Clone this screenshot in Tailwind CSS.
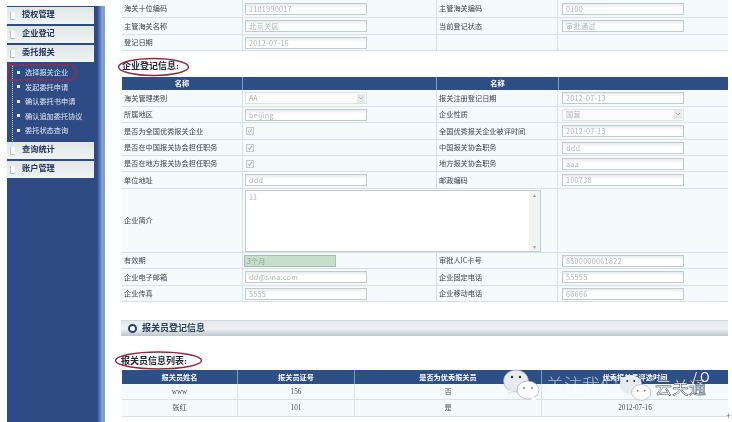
<!DOCTYPE html>
<html lang="zh">
<head>
    <meta charset="UTF-8">
    <title>企业登记信息</title>
    <script src="https://cdn.jsdelivr.net/npm/@tailwindcss/browser@4"></script>
</head>
<body class="bg-white">
<div class="relative w-[732px] h-[422px] overflow-hidden flex bg-white text-[#3d4246] text-[7.2px] font-['Noto_Sans_CJK_SC','Liberation_Sans',sans-serif] blur-[0.45px]">

    <!-- sidebar -->
    <aside class="relative ml-[7px] mt-[6px] w-[98px] shrink-0 bg-gradient-to-r from-[#2f4b85] from-[92%] to-[#7f9fd8] to-[97%]">
        <div class="w-[87px] pt-[1px] flex flex-col gap-[2px]">
            <div class="h-[17px] flex items-center gap-[7px] pl-[3px] bg-gradient-to-b from-[#dfe6e6] to-[#f0f4f3] text-[8.2px] font-bold text-[#24365a] font-['Liberation_Serif','Noto_Sans_CJK_SC',serif]"><span class="w-[5px] h-[8px] border-l border-b border-[#b8c2c4] bg-white/70"></span>授权管理</div>
            <div class="h-[17px] flex items-center gap-[7px] pl-[3px] bg-gradient-to-b from-[#dfe6e6] to-[#f0f4f3] text-[8.2px] font-bold text-[#24365a] font-['Liberation_Serif','Noto_Sans_CJK_SC',serif]"><span class="w-[5px] h-[8px] border-l border-b border-[#b8c2c4] bg-white/70"></span>企业登记</div>
            <div class="h-[17px] flex items-center gap-[7px] pl-[3px] bg-gradient-to-b from-[#dfe6e6] to-[#f0f4f3] text-[8.2px] font-bold text-[#24365a] font-['Liberation_Serif','Noto_Sans_CJK_SC',serif]"><span class="w-[5px] h-[8px] border-l border-b border-[#b8c2c4] bg-white/70"></span>委托报关</div>
        </div>
        <ul class="relative w-[87px] h-[80px] pt-[3px] pl-[10px] text-[#dfe6f2] text-[7.2px] leading-[14.5px]">
            <li class="flex items-center gap-[5px]"><span class="w-[3px] h-[3px] bg-[#e8efe0]"></span>选择报关企业</li>
            <li class="flex items-center gap-[5px]"><span class="w-[3px] h-[3px] bg-[#e8efe0]"></span>发起委托申请</li>
            <li class="flex items-center gap-[5px]"><span class="w-[3px] h-[3px] bg-[#e8efe0]"></span>确认委托书申请</li>
            <li class="flex items-center gap-[5px]"><span class="w-[3px] h-[3px] bg-[#e8efe0]"></span>确认追加委托协议</li>
            <li class="flex items-center gap-[5px]"><span class="w-[3px] h-[3px] bg-[#e8efe0]"></span>委托状态查询</li>
            <span class="absolute left-[5px] top-[3px] h-[76px] border-l border-dotted border-[#cfd8ea]"></span>
            <span class="absolute left-0 top-[2px] w-[70px] h-[17px] rounded-r-[8px] border-2 border-[#8d2f4e]/80"></span>
        </ul>
        <div class="w-[87px] flex flex-col gap-[2px]">
            <div class="h-[17px] flex items-center gap-[7px] pl-[3px] bg-gradient-to-b from-[#dfe6e6] to-[#f0f4f3] text-[8.2px] font-bold text-[#24365a] font-['Liberation_Serif','Noto_Sans_CJK_SC',serif]"><span class="w-[5px] h-[8px] border-l border-b border-[#b8c2c4] bg-white/70"></span>查询统计</div>
            <div class="h-[17px] flex items-center gap-[7px] pl-[3px] bg-gradient-to-b from-[#dfe6e6] to-[#f0f4f3] text-[8.2px] font-bold text-[#24365a] font-['Liberation_Serif','Noto_Sans_CJK_SC',serif]"><span class="w-[5px] h-[8px] border-l border-b border-[#b8c2c4] bg-white/70"></span>账户管理</div>
        </div>
    </aside>

    <!-- content -->
    <main class="pl-[17px] w-[623px]">
        <div id="top-table" class="grid grid-cols-[121px_194px_121px_170px] w-[606px]"></div>
        <h3 class="h-[26px] leading-[30px] text-[9px] font-bold text-[#1c2430] font-['Liberation_Serif','Noto_Sans_CJK_SC',serif]">企业登记信息:</h3>
        <div class="grid grid-cols-[121px_194px_121px_170px] w-[606px] h-[13px] bg-[#2d4f86] text-white font-bold text-center leading-[13px]">
            <div class="border-r border-[#7f9ac4]">名称</div>
            <div class="border-r border-[#7f9ac4]"></div>
            <div>名称</div>
            <div class="border-l border-[#7f9ac4]"></div>
        </div>
        <div id="main-table" class="grid grid-cols-[121px_194px_121px_170px] w-[606px]"></div>

        <div class="mt-[18px] h-[16px] w-[607px] -ml-[1px] flex items-center pl-[7px] gap-[5px] bg-gradient-to-b from-[#e4eaeb] via-[#eef2f2] to-[#bcc7cc] border-t border-[#d3dadd]">
            <span class="w-[9px] h-[9px] rounded-full border-[2.5px] border-[#24406f] bg-white"></span>
            <span class="text-[9px] font-bold text-[#27415f] font-['Liberation_Serif','Noto_Sans_CJK_SC',serif]">报关员登记信息</span>
        </div>

        <h3 class="mt-[15px] h-[19px] leading-[20px] text-[9px] font-bold text-[#1c2430] font-['Liberation_Serif','Noto_Sans_CJK_SC',serif] -ml-[1px]">报关员信息列表:</h3>
        <div class="grid grid-cols-[116px_117px_187px_186px] w-[606px] h-[14px] bg-[#2d4f86] text-white font-bold text-center leading-[14px]">
            <div class="border-r border-[#7f9ac4]">报关员姓名</div>
            <div class="border-r border-[#7f9ac4]">报关员证号</div>
            <div class="border-r border-[#7f9ac4]">是否为优秀报关员</div>
            <div>优秀报关员评选时间</div>
        </div>
        <div class="grid grid-cols-[116px_117px_187px_186px] w-[606px] text-center font-['Liberation_Serif','Noto_Sans_CJK_SC',serif] text-[#4a4f52]">
            <div class="h-[16px] leading-[16px] bg-[#f5fafc] border-b border-r border-[#d8e0e5]">www</div>
            <div class="h-[16px] leading-[16px] bg-[#f5fafc] border-b border-r border-[#d8e0e5]">156</div>
            <div class="h-[16px] leading-[16px] bg-[#f5fafc] border-b border-r border-[#d8e0e5]">否</div>
            <div class="h-[16px] leading-[16px] bg-[#f5fafc] border-b border-[#d8e0e5]"></div>
            <div class="h-[17px] leading-[16px] bg-[#f5fafc] border-b border-r border-[#d8e0e5]">张红</div>
            <div class="h-[17px] leading-[16px] bg-[#f5fafc] border-b border-r border-[#d8e0e5]">101</div>
            <div class="h-[17px] leading-[16px] bg-[#f5fafc] border-b border-r border-[#d8e0e5]">是</div>
            <div class="h-[17px] leading-[16px] bg-[#f5fafc] border-b border-[#d8e0e5]">2012-07-16</div>
        </div>
    </main>

    <!-- hand drawn red rings over the headings -->
    <svg class="absolute left-0 top-0 pointer-events-none" width="732" height="422" fill="none" stroke="#8e2a3c" stroke-width="1.4">
        <ellipse cx="153.5" cy="67" rx="35" ry="8.5"/>
        <ellipse cx="158.5" cy="360.5" rx="43" ry="8.5"/>
    </svg>

    <!-- watermark -->
    <svg class="absolute left-[503px] top-[369px]" width="38" height="32" viewBox="0 0 38 32">
        <ellipse cx="13" cy="12" rx="12.5" ry="11" fill="#e8ecf0" stroke="#8f9bb0" stroke-width=".6"/>
        <path d="M6 20l-1 6 6-3z" fill="#e8ecf0"/>
        <circle cx="9" cy="8" r="1.2" fill="#333"/><circle cx="17" cy="8" r="1.2" fill="#333"/>
        <ellipse cx="25" cy="21" rx="11" ry="9" fill="#fff" stroke="#8f9bb0" stroke-width=".6"/>
        <path d="M31 28l3 4-7-2z" fill="#fff"/>
        <circle cx="21" cy="19" r="1" fill="#888"/><circle cx="29" cy="19" r="1" fill="#888"/>
    </svg>
    <svg class="absolute left-[619px] top-[374px]" width="34" height="28" viewBox="0 0 38 32">
        <ellipse cx="13" cy="12" rx="12.5" ry="11" fill="#e8ecf0"/>
        <circle cx="9" cy="8" r="1.2" fill="#333"/><circle cx="17" cy="8" r="1.2" fill="#333"/>
        <ellipse cx="25" cy="21" rx="11" ry="9" fill="#fff" stroke="#8f9bb0" stroke-width=".6"/>
        <circle cx="21" cy="19" r="1" fill="#888"/><circle cx="29" cy="19" r="1" fill="#888"/>
    </svg>
    <span class="absolute left-[655px] top-[375px] text-[17px] leading-[24px] text-white [-webkit-text-stroke:0.5px_#39485c]">云关通</span>
    <span class="absolute left-[546px] top-[372px] text-[18px] leading-[24px] font-light text-white/60">关注我们</span>
    <span class="absolute left-[692px] top-[369px] text-[13px] leading-[16px] text-white">/ O</span>
    <span class="absolute left-[726px] top-[411px] text-[9px] leading-[10px] text-[#777]">+</span>
</div>

<script>
    const cell = 'bg-[#f5fafc] border-b border-r border-[#d8e0e5] flex items-center pl-[2px] overflow-hidden whitespace-nowrap';
    const lastCell = 'bg-[#f5fafc] border-b border-[#d8e0e5] flex items-center pl-[4px] overflow-hidden';

    function field(type, value) {
        if (type === 'check') return `<span class="ml-[1px] w-[8px] h-[8px] border border-[#c3cdcb] bg-[#eef3f2] flex items-center justify-center"><svg width="6" height="6" viewBox="0 0 6 6" fill="none" stroke="#a9b4b1" stroke-width="1"><path d="M1 3l1.5 1.5L5 1"/></svg></span>`;
        if (type === 'select') return `<span class="w-[122px] h-[12px] border border-[#dde3e2] bg-[#fbfcfa] flex items-center justify-between pl-[3px] text-[#aeb4b4]">${value}<span class="w-[8px] h-[9px] mr-[1px] bg-[#e6ebe9] flex items-center justify-center"><svg width="6" height="5" viewBox="0 0 6 5" fill="none" stroke="#a9b4b1" stroke-width="1"><path d="M1 1l2 2 2-2"/></svg></span></span>`;
        if (type === 'area') return `<span class="relative w-[296px] h-[62px] border border-[#c3cbc9] bg-white pl-[3px] pt-[1px] text-[#aeb4b4] shrink-0 self-center">${value}<span class="absolute right-0 top-0 w-[11px] h-full bg-[#f1f4f3] flex flex-col justify-between items-center text-[6px] leading-[8px] text-[#9aa5a2]"><span>▴</span><span>▾</span></span></span>`;
        if (type === 'green') return `<span class="-ml-[1px] w-[92px] h-[12px] border border-[#a9bdae] bg-[#c6dfca] pl-[2px] leading-[10px] text-[#8fa596]">${value}</span>`;
        return `<span class="w-[122px] h-[12px] border border-[#c3cbc9] bg-gradient-to-b from-[#e6edeb] to-white to-40% pl-[3px] leading-[10px] text-[#aeb4b4] tracking-[0.3px]">${value}</span>`;
    }

    function row(h, l1, f1, l2, f2) {
        return `<div class="${h} ${cell}">${l1}</div><div class="${h} ${cell}">${f1 ? field(f1[0], f1[1]) : ''}</div>`
             + `<div class="${h} ${cell}">${l2}</div><div class="${h} ${lastCell}">${f2 ? field(f2[0], f2[1]) : ''}</div>`;
    }

    document.getElementById('top-table').innerHTML = [
        ['h-[18px]', '海关十位编码', ['text', '1101990017'], '主管海关编码', ['text', '0100']],
        ['h-[17px]', '主管海关名称', ['text', '北京关区'], '当前登记状态', ['text', '审批通过']],
        ['h-[16px]', '登记日期', ['text', '2012-07-16'], '', null],
    ].map(r => row(...r)).join('');

    document.getElementById('main-table').innerHTML = [
        ['h-[17px]', '海关管理类别', ['select', 'AA'], '报关注册登记日期', ['text', '2012-07-13']],
        ['h-[16px]', '所属地区', ['text', 'beijing'], '企业性质', ['select', '国营']],
        ['h-[17px]', '是否为全国优秀报关企业', ['check'], '全国优秀报关企业被评时间', ['text', '2012-07-13']],
        ['h-[16px]', '是否在中国报关协会担任职务', ['check'], '中国报关协会职务', ['text', 'ddd']],
        ['h-[16px]', '是否在地方报关协会担任职务', ['check'], '地方报关协会职务', ['text', 'aaa']],
        ['h-[17px]', '单位地址', ['text', 'ddd'], '邮政编码', ['text', '100738']],
    ].map(r => row(...r)).join('')
      + `<div class="h-[64px] ${cell}">企业简介</div><div class="h-[64px] col-span-2 bg-[#f5fafc] border-b border-r border-[#d8e0e5] flex items-center pl-[2px]">${field('area', '11')}</div><div class="h-[64px] ${lastCell}"></div>`
      + [
        ['h-[16px]', '有效期', ['green', '3个月'], '审批人IC卡号', ['text', '8500000061822']],
        ['h-[17px]', '企业电子邮箱', ['text', 'dd@sina.com'], '企业固定电话', ['text', '55555']],
        ['h-[16px]', '企业传真', ['text', '5555'], '企业移动电话', ['text', '66666']],
    ].map(r => row(...r)).join('');
</script>
</body>
</html>
